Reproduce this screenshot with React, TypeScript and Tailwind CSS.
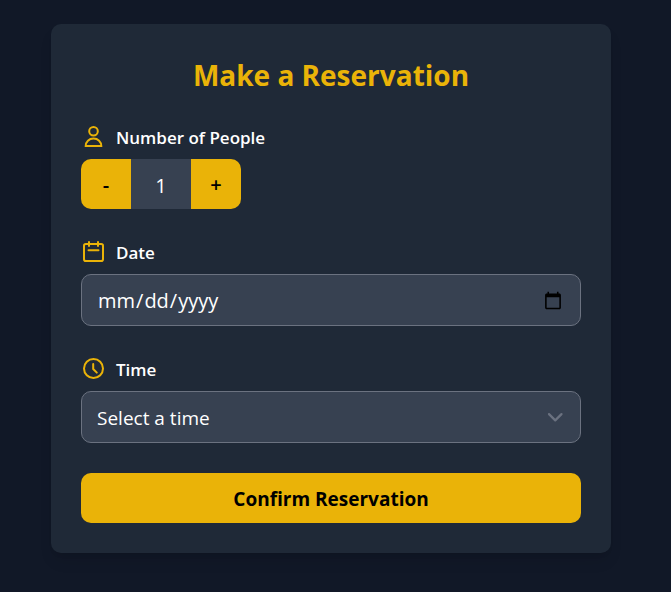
import { useState, type ReactNode } from 'react';

const TIMES = ['5:00 PM', '6:00 PM', '7:00 PM', '8:00 PM', '9:00 PM'];

function Icon({ children }: { children: ReactNode }) {
  return (
    <svg
      viewBox="0 0 25 25"
      className="size-[25px] shrink-0 text-[#eab308]"
      fill="none"
      stroke="currentColor"
      strokeWidth="2"
      strokeLinecap="round"
      strokeLinejoin="round"
      aria-hidden="true"
    >
      {children}
    </svg>
  );
}

function FieldLabel({ htmlFor, icon, children }: { htmlFor: string; icon: ReactNode; children: ReactNode }) {
  return (
    <label htmlFor={htmlFor} className="flex items-center gap-2.5 text-[17px] leading-[25px] font-semibold text-white">
      <Icon>{icon}</Icon>
      <span className="h-[25px] pt-px">{children}</span>
    </label>
  );
}

export default function App() {
  const [people, setPeople] = useState(1);
  const [date, setDate] = useState('');
  const [time, setTime] = useState('');

  return (
    <main className="flex min-h-screen items-start justify-center bg-[#111827] py-6 pr-[9px] font-['Open_Sans','Noto_Sans',sans-serif]">
      <form
        onSubmit={(e) => e.preventDefault()}
        className="flex w-full max-w-[560px] flex-col gap-[30px] rounded-[10px] bg-[#1f2937] p-[30px] shadow-lg"
      >
        <h1 className="h-10 pt-px text-center text-[28px] leading-10 font-bold text-[#eab308]">Make a Reservation</h1>

        <div className="flex flex-col gap-2.5">
          <FieldLabel
            htmlFor="people"
            icon={
              <>
                <circle cx="12.5" cy="7.2" r="4.3" />
                <path strokeLinejoin="miter" d="M4.7 22.1C4.7 17.6 8 14.6 12.5 14.6s7.8 3 7.8 7.5z" />
              </>
            }
          >
            Number of People
          </FieldLabel>
          <div className="flex text-xl text-black">
            <button
              type="button"
              aria-label="Fewer people"
              onClick={() => setPeople(Math.max(1, people - 1))}
              className="h-[50px] w-[50px] rounded-l-[10px] bg-[#eab308] pt-0.5 font-semibold"
            >
              -
            </button>
            <input
              id="people"
              type="text"
              readOnly
              value={people}
              className="h-[50px] w-[60px] bg-[#374151] pt-0.5 text-center text-white outline-none"
            />
            <button
              type="button"
              aria-label="More people"
              onClick={() => setPeople(people + 1)}
              className="h-[50px] w-[50px] rounded-r-[10px] bg-[#eab308] pt-0.5 font-semibold"
            >
              +
            </button>
          </div>
        </div>

        <div className="flex flex-col gap-2.5">
          <FieldLabel
            htmlFor="date"
            icon={
              <>
                <rect x="3" y="5" width="19" height="17" rx="1.8" />
                <path d="M8 3v4M17 3v4M7.5 11.3h10" />
              </>
            }
          >
            Date
          </FieldLabel>
          <input
            id="date"
            type="date"
            value={date}
            onChange={(e) => setDate(e.target.value)}
            className="h-[52px] w-full rounded-[10px] border border-[#6b7280] bg-[#374151] px-[15px] pt-0.5 text-xl text-white outline-none"
          />
        </div>

        <div className="flex flex-col gap-2.5">
          <FieldLabel
            htmlFor="time"
            icon={
              <>
                <circle cx="12.5" cy="12.5" r="9.5" />
                <path d="M12.2 8v5l3.6 3.6" />
              </>
            }
          >
            Time
          </FieldLabel>
          <div className="grid">
            <select
              id="time"
              value={time}
              onChange={(e) => setTime(e.target.value)}
              className="col-start-1 row-start-1 h-[52px] w-full appearance-none rounded-[10px] border border-[#6b7280] bg-[#374151] px-[15px] pt-0.5 text-[19px] text-white outline-none"
            >
              <option value="">Select a time</option>
              {TIMES.map((t) => (
                <option key={t}>{t}</option>
              ))}
            </select>
            <svg
              viewBox="0 0 20 20"
              className="pointer-events-none col-start-1 row-start-1 mr-[13px] size-[25px] self-center justify-self-end text-[#6b7280]"
              fill="none"
              stroke="currentColor"
              strokeWidth="1.8"
              strokeLinecap="round"
              strokeLinejoin="round"
              aria-hidden="true"
            >
              <path d="M4.8 7.3l5 5 5-5" />
            </svg>
          </div>
        </div>

        <button type="submit" className="h-[50px] w-full rounded-[10px] bg-[#eab308] pt-0.5 text-[19px] font-bold text-black">
          Confirm Reservation
        </button>
      </form>
    </main>
  );
}
